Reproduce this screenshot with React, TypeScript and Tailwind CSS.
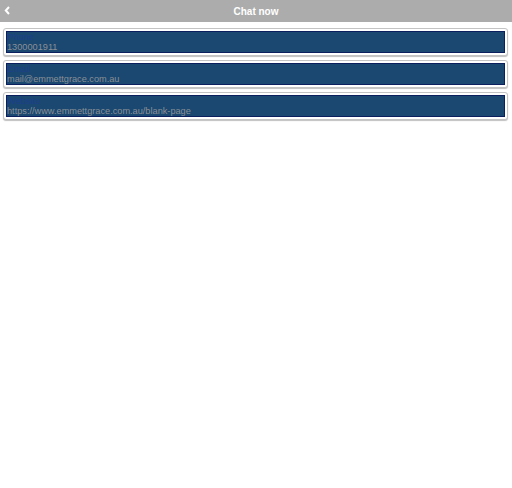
import React from "react";

const items = [
  { label: "Phone", value: "1300001911" },
  { label: "Email", value: "mail@emmettgrace.com.au" },
  { label: "Website", value: "https://www.emmettgrace.com.au/blank-page" },
];

export default function App() {
  return (
    <div className="min-h-[488px] bg-white" style={{ fontFamily: '"Liberation Sans", Arial, sans-serif' }}>
      {/* Header bar */}
      <div className="relative flex h-[22px] items-center justify-center bg-[#acacac]">
        <svg className="absolute left-[4px] top-[6px]" width="7" height="9" viewBox="0 0 7 9">
          <path d="M5 1 L1.8 4.5 L5 8" fill="none" stroke="#ffffff" strokeWidth="2" />
        </svg>
        <span className="text-[10px] font-bold text-white">Chat now</span>
      </div>

      {/* Contact rows */}
      <div className="ml-[3px] mr-[4px] mt-[6px] flex flex-col gap-[4px]">
        {items.map((it) => (
          <div
            key={it.label}
            className="rounded-[3px] border border-[#c4c4c4] bg-white p-[2px] shadow-[0_1px_1px_rgba(0,0,0,0.25)]"
          >
            <div className="flex h-[22px] flex-col justify-center border border-[#0b1f5e] bg-[#1a4870] text-[9.2px] leading-[10px]">
              <span className="text-[#1d3f8c]">{it.label}</span>
              <span className="text-[#8a8f96]">{it.value}</span>
            </div>
          </div>
        ))}
      </div>
    </div>
  );
}
